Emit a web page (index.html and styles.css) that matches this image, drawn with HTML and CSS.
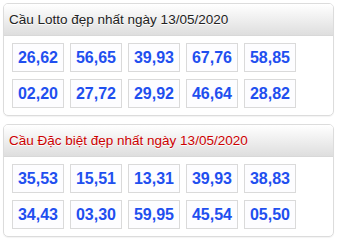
FILE: index.html
```html
<!DOCTYPE html>
<html>
<head>
<meta charset="utf-8">
<link rel="stylesheet" href="styles.css">
</head>
<body>
<div class="panel">
  <div class="head">Cầu Lotto đẹp nhất ngày 13/05/2020</div>
  <div class="grid">
    <div class="cell">26,62</div><div class="cell">56,65</div><div class="cell">39,93</div><div class="cell">67,76</div><div class="cell">58,85</div>
    <div class="cell">02,20</div><div class="cell">27,72</div><div class="cell">29,92</div><div class="cell">46,64</div><div class="cell">28,82</div>
  </div>
</div>
<div class="panel">
  <div class="head red">Cầu Đặc biệt đẹp nhất ngày 13/05/2020</div>
  <div class="grid">
    <div class="cell">35,53</div><div class="cell">15,51</div><div class="cell">13,31</div><div class="cell">39,93</div><div class="cell">38,83</div>
    <div class="cell">34,43</div><div class="cell">03,30</div><div class="cell">59,95</div><div class="cell">45,54</div><div class="cell">05,50</div>
  </div>
</div>
</body>
</html>
```
FILE: styles.css
```css
html, body { margin: 0; padding: 0; background: #fff; }
body { padding: 3px 3px 0 3px; font-family: "Liberation Sans", Arial, sans-serif; }
.panel {
  width: 329px;
  border: 1px solid #dcdcdc;
  border-radius: 5px;
  margin-bottom: 8px;
  overflow: hidden;
  box-shadow: 0 1px 1px rgba(0,0,0,0.05);
}
.head {
  height: 31px;
  line-height: 31px;
  padding-left: 5px;
  font-size: 13.5px;
  color: #222;
  background: linear-gradient(#ffffff, #dedede);
  border-bottom: 1px solid #d8d8d8;
  text-shadow: 0 1px 0 #fff;
}
.head.red { color: #cc0000; }
.grid {
  display: grid;
  grid-template-columns: repeat(5, 52px);
  column-gap: 6px;
  row-gap: 7px;
  padding: 7px 8px 7px 8px;
}
.cell {
  height: 27px;
  border: 1px solid #dadada;
  background: #fdfdff;
  color: #1f4fef;
  font-weight: bold;
  font-size: 16px;
  line-height: 28px;
  text-align: center;
}
```
